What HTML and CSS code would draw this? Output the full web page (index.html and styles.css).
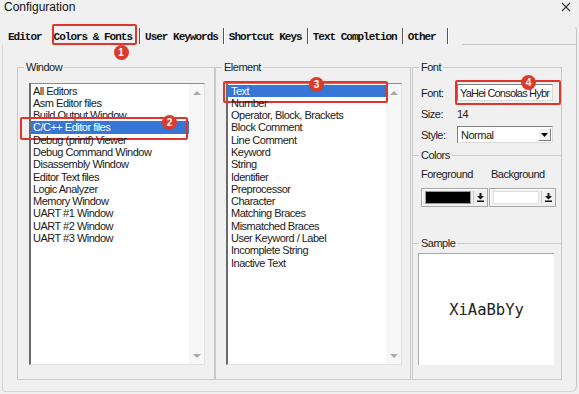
FILE: index.html
```html
<!DOCTYPE html>
<html lang="en">
<head>
    <meta charset="UTF-8">
    <title>Configuration</title>
    <link rel="stylesheet" href="styles.css">
</head>
<body>
<div class="dialog">
    <div class="titlebar">
        <span class="title">Configuration</span>
        <svg class="close" width="10" height="10" viewBox="0 0 10 10"><path d="M1 1L9 9M9 1L1 9" stroke="#333" stroke-width="1.1"/></svg>
    </div>

    <div class="tabstrip">
        <div class="tab first">Editor</div>
        <div class="tab active">Colors &amp; Fonts
            <div class="mark mark-1"><span class="badge">1</span></div>
        </div>
        <div class="tab">User Keywords</div>
        <div class="tab">Shortcut Keys</div>
        <div class="tab">Text Completion</div>
        <div class="tab last">Other</div>
        <div class="tabfill"></div>
    </div>

    <div class="page">
        <div class="group win">
            <div class="legend">Window</div>
            <div class="list">
                <div class="items">
                    <div class="item">All Editors</div>
                    <div class="item">Asm Editor files</div>
                    <div class="item">Build Output Window</div>
                    <div class="item selected">C/C++ Editor files
                        <div class="mark mark-2"><span class="badge">2</span></div>
                    </div>
                    <div class="item">Debug (printf) Viewer</div>
                    <div class="item">Debug Command Window</div>
                    <div class="item">Disassembly Window</div>
                    <div class="item">Editor Text files</div>
                    <div class="item">Logic Analyzer</div>
                    <div class="item">Memory Window</div>
                    <div class="item">UART #1 Window</div>
                    <div class="item">UART #2 Window</div>
                    <div class="item">UART #3 Window</div>
                </div>
                <div class="scroll"><span class="up"></span><span class="down"></span></div>
            </div>
        </div>

        <div class="group elem">
            <div class="legend">Element</div>
            <div class="list">
                <div class="items">
                    <div class="item selected">Text
                        <div class="mark mark-3"><span class="badge">3</span></div>
                    </div>
                    <div class="item">Number</div>
                    <div class="item">Operator, Block, Brackets</div>
                    <div class="item">Block Comment</div>
                    <div class="item">Line Comment</div>
                    <div class="item">Keyword</div>
                    <div class="item">String</div>
                    <div class="item">Identifier</div>
                    <div class="item">Preprocessor</div>
                    <div class="item">Character</div>
                    <div class="item">Matching Braces</div>
                    <div class="item">Mismatched Braces</div>
                    <div class="item">User Keyword / Label</div>
                    <div class="item">Incomplete String</div>
                    <div class="item">Inactive Text</div>
                </div>
                <div class="scroll"><span class="up"></span><span class="down"></span></div>
            </div>
        </div>

        <div class="col">
            <div class="group font">
                <div class="legend">Font</div>
                <div class="rows">
                    <span class="lbl">Font:</span>
                    <div class="field">
                        <span class="fieldtext">YaHei Consolas Hybr</span>
                        <div class="mark mark-4"><span class="badge">4</span></div>
                    </div>
                    <span class="lbl">Size:</span>
                    <span class="val">14</span>
                    <span class="lbl">Style:</span>
                    <div class="combo">
                        <span class="combotext">Normal</span>
                        <span class="combobtn"><svg width="7" height="4" viewBox="0 0 7 4"><path d="M0 0H7L3.5 4Z" fill="#000"/></svg></span>
                    </div>
                </div>
            </div>

            <div class="group colors">
                <div class="legend">Colors</div>
                <div class="pair labels">
                    <span>Foreground</span>
                    <span class="bg-label">Background</span>
                </div>
                <div class="pair">
                    <div class="colorbtn">
                        <span class="swatch black"></span>
                        <span class="drop"><svg width="7" height="9" viewBox="0 0 7 9"><path d="M2.5 0H4.5V3H7L3.5 6.5L0 3H2.5Z" fill="#111"/><rect x="0" y="7.5" width="7" height="1.5" fill="#111"/></svg></span>
                    </div>
                    <div class="colorbtn">
                        <span class="swatch white"></span>
                        <span class="drop"><svg width="7" height="9" viewBox="0 0 7 9"><path d="M2.5 0H4.5V3H7L3.5 6.5L0 3H2.5Z" fill="#111"/><rect x="0" y="7.5" width="7" height="1.5" fill="#111"/></svg></span>
                    </div>
                </div>
            </div>

            <div class="group sample">
                <div class="legend">Sample</div>
                <div class="samplebox">XiAaBbYy</div>
            </div>
        </div>
    </div>
</div>
</body>
</html>
```

FILE: styles.css
```css
body {
    margin: 0;
    background: #f0f0f0;
    font-family: "Liberation Sans", Arial, sans-serif;
    font-size: 11px;
    letter-spacing: -0.5px;
    color: #1a1a1a;
}
.dialog {
    width: 579px;
    height: 394px;
    overflow: hidden;
}
.titlebar {
    height: 27px;
    display: flex;
    justify-content: space-between;
    align-items: flex-start;
    padding: 0 8px 0 4px;
    box-sizing: border-box;
}
.title {
    font-size: 12px;
    line-height: 14px;
    letter-spacing: 0;
    color: #111;
}
.close { margin-top: 2px; }

.tabstrip {
    display: flex;
    align-items: flex-start;
    height: 18px;
    padding-left: 3px;
    margin-right: 2px;
}
.tab {
    position: relative;
    margin-top: 1px;
    padding: 0 5px;
    height: 16px;
    line-height: 18px;
    font-family: "Liberation Mono", "Courier New", monospace;
    font-weight: bold;
    font-size: 11px;
    letter-spacing: -1px;
    color: #111;
    border-right: 1px solid #555;
    box-shadow: 1px 0 0 #fff;
}
.tab.first {
    padding-right: 6px;
    border-right: none;
    box-shadow: none;
}
.tab.active { padding: 0 7px 0 6px; }
.tab.last { padding-right: 11px; }
.tabfill {
    flex: 1;
    align-self: stretch;
    margin-left: 14px;
    border-bottom: 1px solid #c4c4c4;
    border-right: 1px solid #c4c4c4;
    border-top-right-radius: 3px;
}

.page {
    display: flex;
    align-items: flex-start;
    margin: 0 2px;
    height: 347px;
    box-sizing: border-box;
    padding: 22px 0 0 14px;
    border: 1px solid #d6d6d6;
    border-top: none;
    border-right-color: #c4c4c4;
    border-radius: 0 0 6px 4px;
}

.group {
    border: 1px solid #c9c9c9;
    box-sizing: border-box;
}
.legend {
    width: fit-content;
    margin: -7px 0 0 6px;
    padding: 0 2px;
    line-height: 13px;
    background: #f0f0f0;
    color: #222;
}
.win { width: 198px; height: 313px; }
.elem { width: 196px; height: 313px; }
.win .list { margin: 9px 0 0 11px; }
.elem .list { margin: 9px 0 0 10px; }

.list {
    display: flex;
    width: 176px;
    height: 282px;
    box-sizing: border-box;
    background: #fff;
    border-top: 1px solid #8c8c8c;
    border-left: 2px solid #6a6a6a;
    border-right: 1px solid #e2e2e2;
    border-bottom: 1px solid #e2e2e2;
}
.items {
    flex: 1;
    padding-top: 0.5px;
}
.item {
    position: relative;
    height: 12.3px;
    line-height: 12.3px;
    padding-left: 2px;
    white-space: nowrap;
}
.elem .item { padding-left: 3px; }
.item.selected {
    background: #3576d6;
    color: #fff;
}
.scroll {
    width: 15px;
    background: #f7f7f7;
    display: flex;
    flex-direction: column;
    justify-content: space-between;
    align-items: center;
    padding: 7px 0 6px;
}
.up, .down {
    width: 0;
    height: 0;
    border-left: 4px solid transparent;
    border-right: 4px solid transparent;
}
.up { border-bottom: 4px solid #a9a9a9; }
.down { border-top: 4px solid #a9a9a9; }

.col {
    width: 150px;
    margin-left: 1px;
    display: flex;
    flex-direction: column;
}
.font, .colors {
    height: 88px;
    border-bottom: none;
}
.sample { height: 137px; }

.rows {
    display: grid;
    grid-template-columns: 36px 96px;
    grid-auto-rows: 17px;
    row-gap: 4px;
    align-items: center;
    margin: 10px 0 0 8px;
}
.field, .combo {
    position: relative;
    height: 17px;
    box-sizing: border-box;
    background: #fff;
    border-top: 1px solid #7d7d7d;
    border-left: 1px solid #7d7d7d;
    border-right: 1px solid #dadada;
    border-bottom: 1px solid #dadada;
    display: flex;
    align-items: center;
}
.fieldtext {
    padding-left: 2px;
    letter-spacing: -0.8px;
    white-space: nowrap;
}
.combotext {
    flex: 1;
    padding-left: 3px;
}
.combobtn {
    width: 13px;
    height: 13px;
    margin-right: 1px;
    background: #f0f0f0;
    border: 1px solid;
    border-color: #fff #808080 #808080 #fff;
    box-sizing: border-box;
    display: flex;
    align-items: center;
    justify-content: center;
}

.pair {
    display: grid;
    grid-template-columns: 67px 67px;
    column-gap: 1px;
    margin-left: 8px;
}
.labels {
    margin-top: 6px;
    line-height: 13px;
}
.bg-label { padding-left: 2px; }
.labels + .pair { margin-top: 7px; }
.colorbtn {
    display: flex;
    height: 19px;
    box-sizing: border-box;
    border: 1px solid #a8a8a8;
    box-shadow: inset 1px 1px 0 #fff;
    background: #f0f0f0;
    padding: 2px 1px 2px 3px;
}
.swatch {
    width: 44px;
    border: 1px solid #9a9a9a;
}
.swatch.black { background: #000; }
.swatch.white { background: #fff; border-color: #e0e0e0; }
.drop {
    flex: 1;
    margin-left: 2px;
    border-left: 1px solid #c8c8c8;
    display: flex;
    align-items: center;
    justify-content: center;
}

.samplebox {
    width: 136px;
    height: 112px;
    margin: 3px 0 0 5px;
    box-sizing: border-box;
    background: #fff;
    border-top: 1px solid #a8a8a8;
    border-left: 1px solid #a8a8a8;
    display: flex;
    align-items: center;
    justify-content: center;
    font-family: "DejaVu Sans Mono", monospace;
    font-size: 15.5px;
    letter-spacing: 0;
    color: #222;
}

/* annotation boxes and numbered badges */
.mark {
    position: absolute;
    box-sizing: border-box;
    border: 2px solid #e0352b;
    border-radius: 2px;
}
.mark-1 { left: 4px; top: -4px; width: 85px; height: 21px; }
.mark-2 { left: -11px; top: -4.5px; width: 168px; height: 23px; }
.mark-3 { left: -5px; top: -4px; width: 165px; height: 22px; }
.mark-4 { left: -3px; top: -5px; width: 106px; height: 25px; }
.badge {
    position: absolute;
    width: 15px;
    height: 15px;
    border-radius: 50%;
    background: #d93b2c;
    color: #fff;
    font-family: "Liberation Sans", Arial, sans-serif;
    font-size: 10px;
    font-weight: bold;
    letter-spacing: 0;
    line-height: 15px;
    text-align: center;
}
.mark-1 .badge { left: 60px; top: 19px; }
.mark-2 .badge { left: 140px; top: -4px; }
.mark-3 .badge { left: 84px; top: -6px; }
.mark-4 .badge { left: 64px; top: -7px; }
```
